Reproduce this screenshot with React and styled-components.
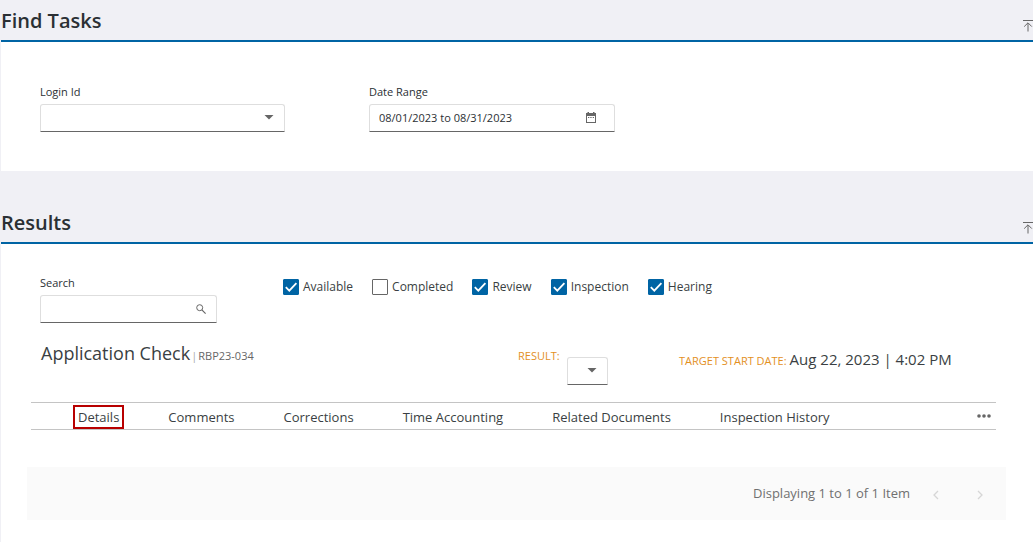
import React, { useState } from 'react';
import styled, { createGlobalStyle } from 'styled-components';

const GlobalStyle = createGlobalStyle`
  * {
    box-sizing: border-box;
  }

  body {
    margin: 0;
    background: #ffffff;
    color: #2b3034;
    font-family: 'Open Sans', 'Noto Sans', sans-serif;
    font-size: 13px;
  }

  button, input, select {
    font-family: inherit;
    color: inherit;
  }
`;

const Page = styled.main`
  padding-left: 1px;
  background: #f0f0f5;
`;

const Panel = styled.section`
  margin-bottom: ${({ $last }) => ($last ? '0' : '31px')};
`;

const PanelHeader = styled.header`
  display: flex;
  align-items: center;
  justify-content: space-between;
  height: 42px;
  border-bottom: 2px solid #0064a4;
`;

const PanelTitle = styled.h2`
  margin: 0;
  padding-top: 2px;
  font-size: 20px;
  font-weight: 600;
  line-height: 38px;
`;

const IconButton = styled.button`
  display: flex;
  align-items: center;
  justify-content: center;
  padding: 0;
  border: 0;
  background: none;
  color: #666666;
  cursor: pointer;
`;

const CollapseButton = styled(IconButton)`
  padding-top: 12px;
`;

const FiltersBody = styled.div`
  display: flex;
  gap: 84px;
  padding: 40px 39px 39px;
  background: #ffffff;
`;

const Field = styled.div`
  display: flex;
  flex-direction: column;
  width: ${({ $width }) => $width};
`;

const Label = styled.label`
  margin-bottom: 2px;
  font-size: 11px;
  line-height: 20px;
`;

const Control = styled.div`
  display: grid;
  align-items: center;
  height: 28px;
  border: 1px solid #dedede;
  border-bottom-color: #666666;
  border-radius: 3px 3px 0 0;
  background: #ffffff;

  > * {
    grid-area: 1 / 1;
  }
`;

const Input = styled.input`
  width: 100%;
  height: 26px;
  padding: 0 32px 1px 9px;
  border: 0;
  background: none;
  font-size: 11px;
  outline: none;
`;

const Select = styled.select`
  width: 100%;
  height: 26px;
  padding: 0 24px 0 9px;
  border: 0;
  background: none;
  font-size: 11px;
  appearance: none;
  outline: none;
`;

const ControlIcon = styled.span`
  display: flex;
  justify-self: end;
  margin-right: ${({ $inset }) => $inset || '10px'};
  padding-bottom: 1px;
  color: #666666;
  pointer-events: none;
`;

const ResultsBody = styled.div`
  padding: 29px 27px 22px 26px;
  background: #ffffff;
`;

const SearchRow = styled.div`
  display: flex;
  align-items: flex-start;
  gap: 66px;
  padding-left: 13px;
`;

const CheckGroup = styled.div`
  display: flex;
  gap: 19px;
  padding-top: 4px;
`;

const CheckLabel = styled.label`
  display: flex;
  align-items: center;
  gap: 4px;
  color: #3a3f43;
  font-size: 12px;
  line-height: 20px;
`;

const Tick = styled.span`
  display: grid;

  > * {
    grid-area: 1 / 1;
  }

  svg {
    pointer-events: none;
  }
`;

const Checkbox = styled.input`
  width: 16px;
  height: 16px;
  margin: 0;
  border: 1px solid #666666;
  border-radius: 1px;
  background: #ffffff;
  appearance: none;

  &:checked {
    border-color: #0064a4;
    background: #0064a4;
  }

  &:not(:checked) + svg {
    visibility: hidden;
  }
`;

const TaskRow = styled.div`
  display: grid;
  grid-template-columns: 477fr 161fr 327fr;
  align-items: start;
  padding: 18px 0 0 14px;
`;

const TaskHeading = styled.div`
  display: flex;
  align-items: baseline;
  gap: 1px;
  font-size: 11px;
  line-height: 24px;
`;

const TaskTitle = styled.h3`
  margin: 0;
  color: #3a3f43;
  font-size: 18px;
  font-weight: 400;
`;

const Separator = styled.span`
  color: #aaaaaa;
`;

const TaskNumber = styled.span`
  color: #666666;
`;

const ResultField = styled.div`
  display: flex;
  align-items: flex-start;
  gap: 7px;
  padding-top: 16px;

  ${Control} {
    width: 41px;
  }
`;

const Caption = styled.label`
  margin-top: -11px;
  color: #e3901e;
  font-size: 11px;
  line-height: 20px;
`;

const TargetDate = styled.p`
  display: flex;
  align-items: baseline;
  gap: 3px;
  margin: 0;
  padding-top: 6px;
  color: #3a3f43;
  font-size: 15px;
  line-height: 24px;

  span {
    color: #e3901e;
    font-size: 11px;
  }
`;

const Tabs = styled.nav`
  display: flex;
  align-items: center;
  justify-content: space-between;
  height: 28px;
  margin: 17px 10px 0 4px;
  padding: 0 5px 0 42px;
  border-top: 1px solid #c4c4c4;
  border-bottom: 1px solid #c4c4c4;
`;

const TabList = styled.div`
  display: flex;
  gap: 39px;
  padding-top: 2px;
`;

const Tab = styled.button`
  height: 24px;
  padding: 0 3px;
  border: 2px solid ${({ $active }) => ($active ? '#b80000' : 'transparent')};
  background: none;
  color: #3a3f43;
  font-size: 13px;
  line-height: 20px;
  white-space: nowrap;
  cursor: pointer;
`;

const Pager = styled.footer`
  display: flex;
  align-items: center;
  justify-content: flex-end;
  height: 53px;
  margin-top: 37px;
  padding: 0 21px 1px 0;
  background: #fafafa;
  color: #707070;
  font-size: 13px;
`;

const PagerButton = styled(IconButton)`
  width: 10px;
  margin: 3px 0 0 ${({ $gap }) => $gap};

  &:disabled {
    color: #d6d6d6;
  }
`;

const CollapseIcon = () => (
  <svg width="10" height="12" viewBox="0 0 10 12" fill="none" stroke="currentColor">
    <path d="M0 0.5H10" />
    <path d="M5 11.5V3M1.2 6.6L5 2.8L8.8 6.6" />
  </svg>
);

const CaretIcon = () => (
  <svg width="10" height="5" viewBox="0 0 10 5" fill="currentColor">
    <path d="M0.5 0H9.5L5 4.6Z" />
  </svg>
);

const CalendarIcon = () => (
  <svg width="10" height="11" viewBox="0 0 10 11" fill="currentColor">
    <path fillRule="evenodd" d="M1.5 0H3V1H7V0H8.5V1H10V11H0V1H1.5ZM1 4V10H9V4Z" />
    <path d="M2 5H3.3V6H2ZM4.3 5H5.6V6H4.3ZM6.7 5H8V6H6.7Z" />
  </svg>
);

const SearchIcon = () => (
  <svg width="10" height="10" viewBox="0 0 10 10" fill="none" stroke="currentColor">
    <circle cx="3.7" cy="3.7" r="3" />
    <path d="M5.9 5.9L9.6 9.6" strokeWidth="1.2" />
  </svg>
);

const CheckIcon = () => (
  <svg width="16" height="16" viewBox="0 0 16 16" fill="none" stroke="#ffffff" strokeWidth="1.8">
    <path d="M2.8 8.2L6.3 11.7L13.4 4.2" />
  </svg>
);

const MoreIcon = () => (
  <svg width="14" height="4" viewBox="0 0 14 4" fill="currentColor">
    <circle cx="2" cy="2" r="1.8" />
    <circle cx="7" cy="2" r="1.8" />
    <circle cx="12" cy="2" r="1.8" />
  </svg>
);

const Chevron = ({ path }) => (
  <svg width="6" height="10" viewBox="0 0 6 10" fill="none" stroke="currentColor" strokeWidth="1.3">
    <path d={path} />
  </svg>
);

const statuses = ['Available', 'Completed', 'Review', 'Inspection', 'Hearing'];

const tabs = [
  'Details',
  'Comments',
  'Corrections',
  'Time Accounting',
  'Related Documents',
  'Inspection History',
];

const FindTasks = () => {
  const [range, setRange] = useState('08/01/2023 to 08/31/2023');

  return (
    <Panel>
      <PanelHeader>
        <PanelTitle>Find Tasks</PanelTitle>
        <CollapseButton type="button" aria-label="Collapse Find Tasks">
          <CollapseIcon />
        </CollapseButton>
      </PanelHeader>
      <FiltersBody>
        <Field $width="245px">
          <Label htmlFor="login-id">Login Id</Label>
          <Control>
            <Select id="login-id">
              <option value=""></option>
            </Select>
            <ControlIcon>
              <CaretIcon />
            </ControlIcon>
          </Control>
        </Field>
        <Field $width="246px">
          <Label htmlFor="date-range">Date Range</Label>
          <Control>
            <Input id="date-range" value={range} onChange={(e) => setRange(e.target.value)} />
            <ControlIcon $inset="18px">
              <CalendarIcon />
            </ControlIcon>
          </Control>
        </Field>
      </FiltersBody>
    </Panel>
  );
};

const Results = () => {
  const [checked, setChecked] = useState(['Available', 'Review', 'Inspection', 'Hearing']);
  const [activeTab, setActiveTab] = useState('Details');

  const toggleStatus = (status) => {
    setChecked(
      checked.includes(status) ? checked.filter((s) => s !== status) : [...checked, status]
    );
  };

  return (
    <Panel $last>
      <PanelHeader>
        <PanelTitle>Results</PanelTitle>
        <CollapseButton type="button" aria-label="Collapse Results">
          <CollapseIcon />
        </CollapseButton>
      </PanelHeader>
      <ResultsBody>
        <SearchRow>
          <Field $width="177px">
            <Label htmlFor="search">Search</Label>
            <Control>
              <Input id="search" />
              <ControlIcon>
                <SearchIcon />
              </ControlIcon>
            </Control>
          </Field>
          <CheckGroup>
            {statuses.map((status) => (
              <CheckLabel key={status}>
                <Tick>
                  <Checkbox
                    type="checkbox"
                    checked={checked.includes(status)}
                    onChange={() => toggleStatus(status)}
                  />
                  <CheckIcon />
                </Tick>
                {status}
              </CheckLabel>
            ))}
          </CheckGroup>
        </SearchRow>

        <TaskRow>
          <TaskHeading>
            <TaskTitle>Application Check</TaskTitle>
            <Separator>|</Separator>
            <TaskNumber>RBP23-034</TaskNumber>
          </TaskHeading>
          <ResultField>
            <Caption htmlFor="result">RESULT:</Caption>
            <Control>
              <Select id="result">
                <option value=""></option>
              </Select>
              <ControlIcon>
                <CaretIcon />
              </ControlIcon>
            </Control>
          </ResultField>
          <TargetDate>
            <span>TARGET START DATE:</span> Aug 22, 2023 | 4:02 PM
          </TargetDate>
        </TaskRow>

        <Tabs>
          <TabList>
            {tabs.map((tab) => (
              <Tab
                key={tab}
                type="button"
                $active={tab === activeTab}
                onClick={() => setActiveTab(tab)}
              >
                {tab}
              </Tab>
            ))}
          </TabList>
          <IconButton type="button" aria-label="More">
            <MoreIcon />
          </IconButton>
        </Tabs>

        <Pager>
          Displaying 1 to 1 of 1 Item
          <PagerButton type="button" disabled aria-label="Previous page" $gap="21px">
            <Chevron path="M5 1L1 5L5 9" />
          </PagerButton>
          <PagerButton type="button" disabled aria-label="Next page" $gap="34px">
            <Chevron path="M1 1L5 5L1 9" />
          </PagerButton>
        </Pager>
      </ResultsBody>
    </Panel>
  );
};

const App = () => (
  <>
    <GlobalStyle />
    <Page>
      <FindTasks />
      <Results />
    </Page>
  </>
);

export default App;
